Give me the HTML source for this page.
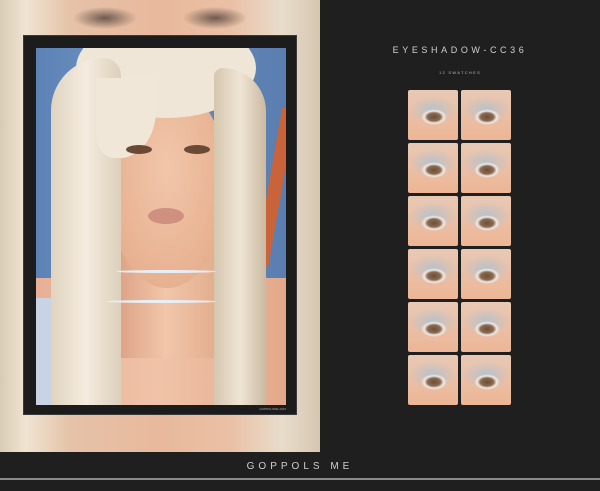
<!DOCTYPE html>
<html><head><style>
*{margin:0;padding:0;box-sizing:border-box}
body{width:600px;height:491px;background:#1f1f1f;position:relative;overflow:hidden;font-family:"Liberation Sans",sans-serif}
.bg{position:absolute;left:0;top:0;width:320px;height:452px;overflow:hidden;
background:radial-gradient(ellipse 40px 14px at 215px 18px,#6e5a4e 0,rgba(0,0,0,0) 80%),radial-gradient(ellipse 40px 14px at 105px 18px,#6e5a4e 0,rgba(0,0,0,0) 80%),linear-gradient(90deg,#d9cbb6 0,#efe4d2 8%,#e6c2a8 22%,#e8b99c 50%,#eac0a5 72%,#e8dccb 88%,#d6c6b0 100%)}
.frame{position:absolute;left:23px;top:35px;width:274px;height:380px;background:#1c1c1c;border:1px solid #3a3a3a}
.photo{position:absolute;left:12px;top:12px;width:250px;height:357px;overflow:hidden;
background:linear-gradient(90deg,#5d82b5 0,#6a8fc0 30%,#5a7eb0 100%)}
.skin{position:absolute;left:0;top:230px;width:250px;height:130px;background:linear-gradient(90deg,#e8b095,#f0c3a8 50%,#e2a98a)}
.neck{position:absolute;left:80px;top:190px;width:100px;height:120px;background:linear-gradient(90deg,#dca083,#f1c6aa,#e3ad8e)}
.face{position:absolute;left:72px;top:40px;width:118px;height:200px;background:radial-gradient(ellipse at 50% 40%,#f2c6aa,#e2a886);border-radius:45% 45% 50% 50%}
.hairL{position:absolute;left:15px;top:10px;width:70px;height:347px;background:linear-gradient(90deg,#e0d4c0,#f4ece0 50%,#ddd0bb);border-radius:60px 20px 0 0}
.hairR{position:absolute;left:178px;top:20px;width:52px;height:337px;background:linear-gradient(90deg,#d6c6ae,#efe5d5 50%,#cbb9a0);border-radius:10px 50px 0 0}
.hairT{position:absolute;left:40px;top:-30px;width:180px;height:100px;background:#efe6d8;border-radius:50%}
.bang{position:absolute;left:60px;top:30px;width:60px;height:80px;background:#f0e7d9;border-radius:0 0 60% 30%}
.eye{position:absolute;top:97px;width:26px;height:9px;background:#6a4a36;border-radius:50%}
.lips{position:absolute;left:112px;top:160px;width:36px;height:16px;background:#d09080;border-radius:50%}
.choker{position:absolute;left:80px;top:222px;width:100px;height:3px;background:#e8eef5;border-radius:50%}
.strap{position:absolute;left:0;top:250px;width:30px;height:107px;background:#c8d4e6}
.orange{position:absolute;left:232px;top:60px;width:14px;height:160px;background:#c9643a;transform:skewX(-10deg)}
.sig{position:absolute;right:10px;bottom:3px;font-size:3px;color:#aaa}
h1{position:absolute;left:380px;width:160px;top:45px;text-align:center;color:#d0d0d0;font-weight:normal;font-size:9px;letter-spacing:3.6px}
.sub{position:absolute;left:380px;width:160px;top:70px;text-align:center;color:#bbb;font-size:4px;letter-spacing:1.3px}
.sw{position:absolute;width:50px;height:50px;border-radius:2px;background:radial-gradient(ellipse 13px 8px at 26px 27px,#6e4e35 0,#8a6a50 50%,#efe9e6 75%,rgba(0,0,0,0) 100%),radial-gradient(ellipse 24px 14px at 25px 20px,#b5c2cc 0,rgba(0,0,0,0) 100%),linear-gradient(#e8c9b5,#edb595)}
.foot{position:absolute;left:0;top:461px;width:600px;text-align:center;color:#cfcfcf;font-size:10px;letter-spacing:4px}
.line{position:absolute;left:0;top:478px;width:600px;height:2px;background:#8a8a8a}
</style></head><body>
<div class="bg">
<div class="frame"><div class="photo">
<div class="orange"></div>
<div class="skin"></div><div class="strap"></div>
<div class="neck"></div><div class="face"></div>
<div class="hairT"></div><div class="hairL"></div><div class="hairR"></div><div class="bang"></div>
<div class="eye" style="left:90px"></div><div class="eye" style="left:148px"></div>
<div class="lips"></div>
<div class="choker"></div><div class="choker" style="top:252px;left:70px;width:110px"></div>
</div><div class="sig">GOPPOLSME 2023</div></div>
</div>
<h1>EYESHADOW-CC36</h1>
<div class="sub">12 SWATCHES</div>
<div class="sw" style="left:408px;top:90px"></div><div class="sw" style="left:461px;top:90px"></div>
<div class="sw" style="left:408px;top:143px"></div><div class="sw" style="left:461px;top:143px"></div>
<div class="sw" style="left:408px;top:196px"></div><div class="sw" style="left:461px;top:196px"></div>
<div class="sw" style="left:408px;top:249px"></div><div class="sw" style="left:461px;top:249px"></div>
<div class="sw" style="left:408px;top:302px"></div><div class="sw" style="left:461px;top:302px"></div>
<div class="sw" style="left:408px;top:355px"></div><div class="sw" style="left:461px;top:355px"></div>
<div class="foot">GOPPOLS ME</div>
<div class="line"></div>
</body></html>
